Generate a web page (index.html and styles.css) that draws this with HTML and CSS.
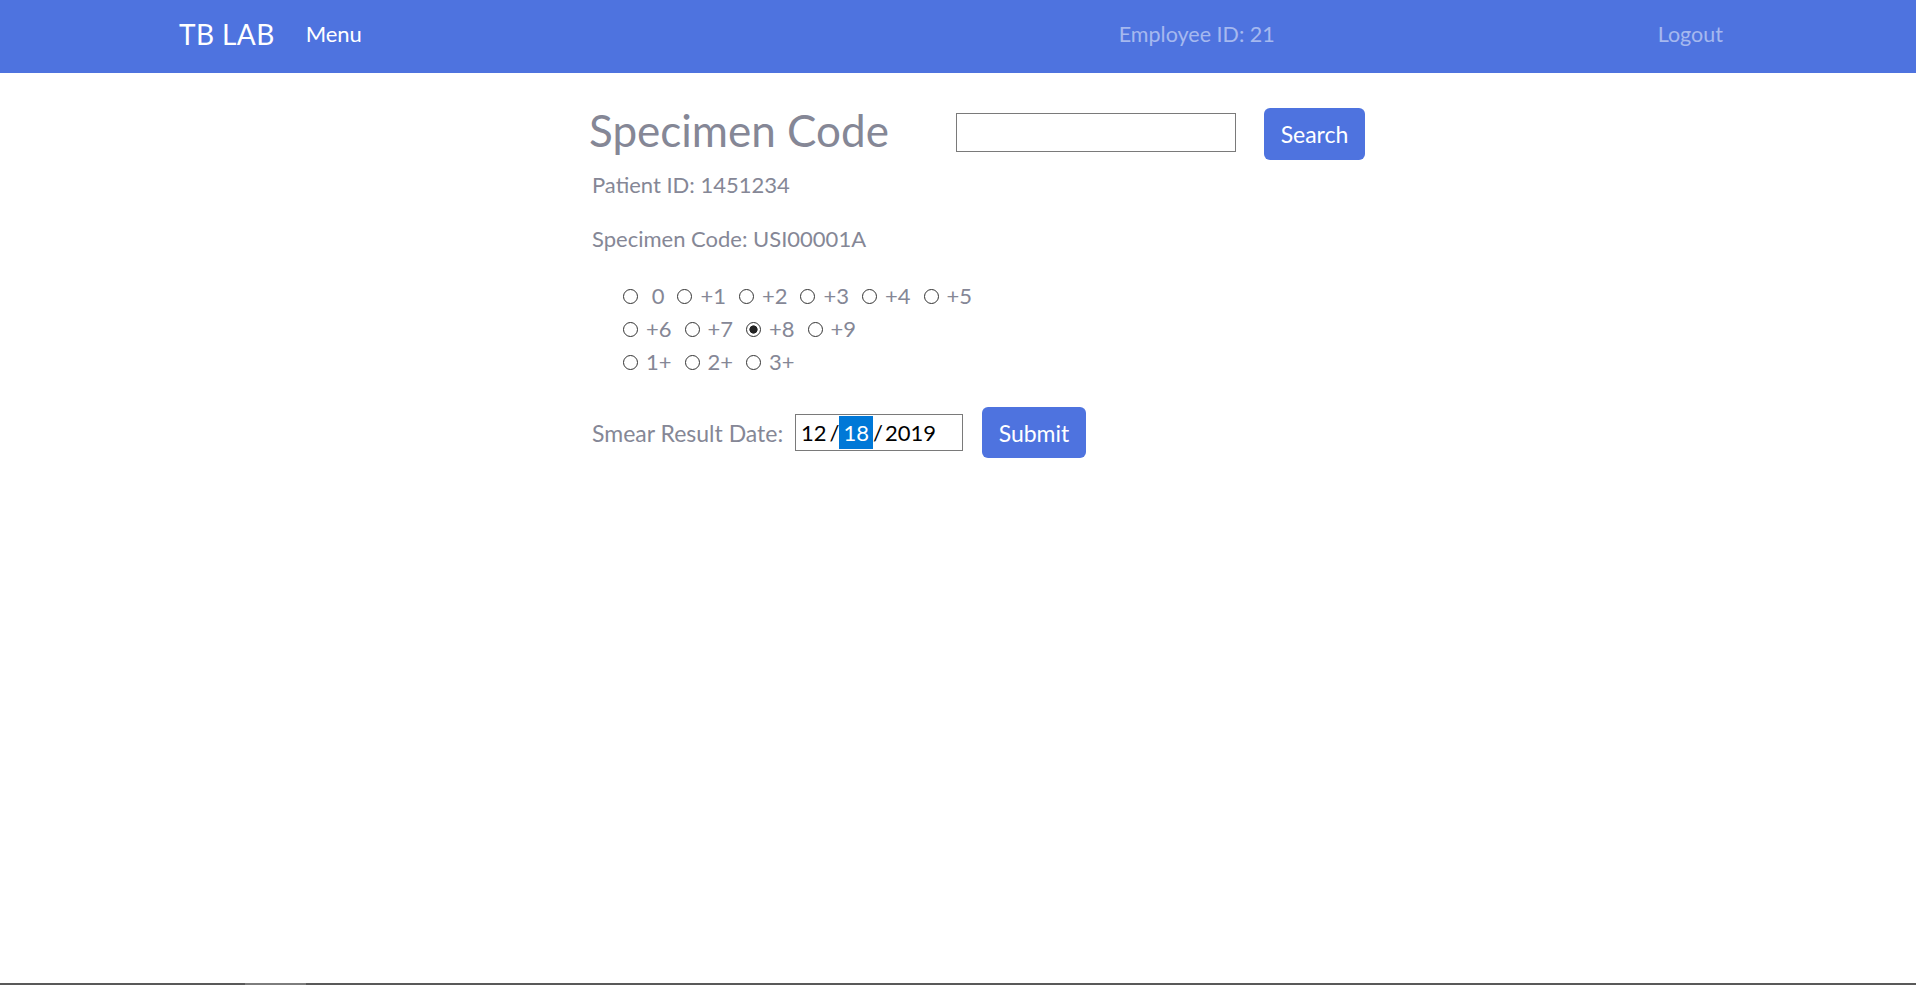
FILE: index.html
```html
<!DOCTYPE html>
<html lang="en">
<head>
<meta charset="utf-8">
<title>TB LAB</title>
<link rel="stylesheet" href="styles.css">
</head>
<body>
<nav class="topbar">
  <a class="brand" href="#">TB LAB</a>
  <a class="menu" href="#">Menu</a>
  <span class="spacer"></span>
  <span class="emp">Employee ID: 21</span>
  <a class="logout" href="#">Logout</a>
</nav>

<main class="content">
  <div class="search-row">
    <h1 class="title">Specimen Code</h1>
    <input class="search-input" type="text" aria-label="Specimen code">
    <button class="btn btn-search" type="button">Search</button>
  </div>

  <p class="info info-first">Patient ID: 1451234</p>
  <p class="info">Specimen Code: USI00001A</p>

  <div class="radios">
    <div class="radio-row">
      <label class="opt"><input type="radio" name="grade">&nbsp;0</label>
      <label class="opt"><input type="radio" name="grade">+1</label>
      <label class="opt"><input type="radio" name="grade">+2</label>
      <label class="opt"><input type="radio" name="grade">+3</label>
      <label class="opt"><input type="radio" name="grade">+4</label>
      <label class="opt"><input type="radio" name="grade">+5</label>
    </div>
    <div class="radio-row">
      <label class="opt"><input type="radio" name="grade">+6</label>
      <label class="opt"><input type="radio" name="grade">+7</label>
      <label class="opt"><input type="radio" name="grade" checked>+8</label>
      <label class="opt"><input type="radio" name="grade">+9</label>
    </div>
    <div class="radio-row">
      <label class="opt"><input type="radio" name="grade">1+</label>
      <label class="opt"><input type="radio" name="grade">2+</label>
      <label class="opt"><input type="radio" name="grade">3+</label>
    </div>
  </div>

  <div class="date-row">
    <span class="date-label">Smear Result Date:</span>
    <div class="date-input">
      <span class="seg">12</span><span class="sep">/</span><span class="seg seg-active">18</span><span class="sep sep-after">/</span><span class="seg">2019</span>
    </div>
    <button class="btn btn-submit" type="button">Submit</button>
  </div>
</main>

<div class="statusbar"><span class="statusbar-thumb"></span></div>
</body>
</html>
```

FILE: styles.css
```css
html, body {
  margin: 0;
  padding: 0;
}

body {
  font-family: Lato, "Open Sans", sans-serif;
  color: #858796;
  background: #ffffff;
}

.topbar {
  display: flex;
  align-items: center;
  box-sizing: border-box;
  height: 73px;
  padding: 0 193px 6px 179px;
  background: #4e73df;
}

.topbar a {
  text-decoration: none;
}

.brand {
  font-size: 28px;
  letter-spacing: 0.4px;
  color: #ffffff;
}

.menu {
  margin-left: 31px;
  font-size: 22px;
  color: #ffffff;
}

.spacer {
  flex: 1;
}

.emp,
.logout {
  font-size: 21.5px;
  color: rgba(255, 255, 255, 0.5);
}

.logout {
  margin-left: 383px;
}

.content {
  padding: 30px 0 0 589px;
}

.search-row {
  display: flex;
  align-items: flex-start;
}

.title {
  width: 367px;
  margin: 0;
  font-size: 44px;
  font-weight: 400;
  line-height: 54px;
  color: #858796;
}

.search-input {
  box-sizing: border-box;
  width: 280px;
  height: 39px;
  margin: 10px 0 0 0;
  border: 1px solid #7a7a7a;
  border-radius: 0;
  padding: 0 6px;
  font-family: Lato, sans-serif;
  font-size: 20px;
  background: #ffffff;
}

.btn {
  box-sizing: border-box;
  border: none;
  border-radius: 6px;
  background: #4e73df;
  color: #ffffff;
  font-family: Lato, sans-serif;
  font-size: 23px;
  padding: 0;
  cursor: pointer;
}

.btn-search {
  width: 101px;
  height: 52px;
  margin: 5px 0 0 28px;
}

.info {
  margin: 21px 0 0 0;
  padding-left: 3px;
  font-size: 22px;
  line-height: 33px;
}

.info-first {
  margin-top: 8px;
}

.radios {
  margin-top: 23.5px;
  padding-left: 34px;
  font-size: 22px;
}

.radio-row {
  display: flex;
  align-items: center;
  gap: 13px;
  height: 33px;
  line-height: 33px;
}

.opt {
  display: inline-flex;
  align-items: center;
  gap: 8px;
}

.opt input {
  appearance: none;
  -webkit-appearance: none;
  box-sizing: border-box;
  width: 15px;
  height: 15px;
  margin: 2px 0 0 0;
  border: 1px solid #333333;
  border-radius: 50%;
  background: #ffffff;
}

.opt input:checked {
  background: radial-gradient(circle, #222222 0 3.8px, #ffffff 4.4px);
}

.date-row {
  display: flex;
  align-items: center;
  margin-top: 29.5px;
  height: 51px;
}

.date-label {
  box-sizing: border-box;
  width: 206px;
  padding-left: 3px;
  font-size: 23px;
}

.date-input {
  display: flex;
  align-items: center;
  box-sizing: border-box;
  width: 168px;
  height: 37px;
  padding-left: 5px;
  border: 1px solid #7a7a7a;
  background: #ffffff;
  color: #000000;
  font-size: 22px;
}

.sep {
  margin-left: 3px;
}

.sep-after {
  margin-left: 0;
  margin-right: 2px;
}

.seg-active {
  display: inline-block;
  height: 33px;
  line-height: 33px;
  padding: 0 4px;
  background: #0078d7;
  color: #ffffff;
}

.btn-submit {
  width: 104px;
  height: 51px;
  margin-left: 19px;
}

.statusbar {
  position: fixed;
  left: 0;
  right: 0;
  bottom: 0;
  height: 2px;
  background: #595959;
  display: flex;
}

.statusbar-thumb {
  width: 61px;
  margin-left: 245px;
  background: #7d7d7d;
}
```
